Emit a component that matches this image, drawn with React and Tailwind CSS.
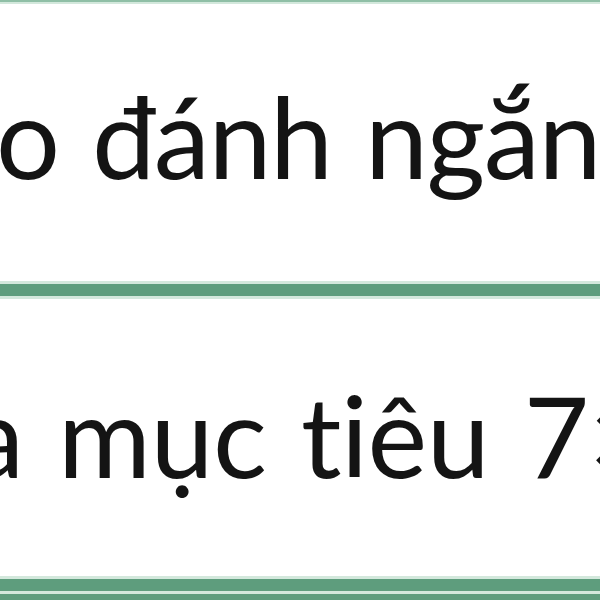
import React from 'react';

const Band = () => (
  <div className="flex flex-col">
    <div className="h-[3px] bg-[#d3e8dc]"></div>
    <div className="h-[12px] bg-[#5e9d7d]"></div>
    <div className="h-[3px] bg-[#d3e8dc]"></div>
  </div>
);

const Row = ({ text, offset }) => (
  <div className="h-[277px] bg-white flex items-center overflow-hidden">
    <span
      className={`whitespace-nowrap text-[#141414] text-[113px] leading-none [font-variant-ligatures:none] [word-spacing:6px] ${offset}`}
      style={{ fontFamily: 'Lato, "Open Sans", sans-serif' }}
    >
      {text}
    </span>
  </div>
);

const App = () => {
  return (
    <div className="w-[600px] h-[600px] overflow-hidden bg-white flex flex-col">
      <div className="h-[2px] bg-[#8fbfa6]"></div>
      <div className="h-[2px] bg-[#d3e8dc]"></div>
      <Row text="o đánh ngắn mạch" offset="-ml-[4px] mt-[-14px] tracking-[-1.5px]" />
      <Band />
      <Row text="a mục tiêu 7×24" offset="-ml-[32px] mt-[-6px] tracking-[-0.5px]" />
      <Band />
      <div className="flex-1 bg-[#5e9d7d]"></div>
    </div>
  );
};

export default App;
